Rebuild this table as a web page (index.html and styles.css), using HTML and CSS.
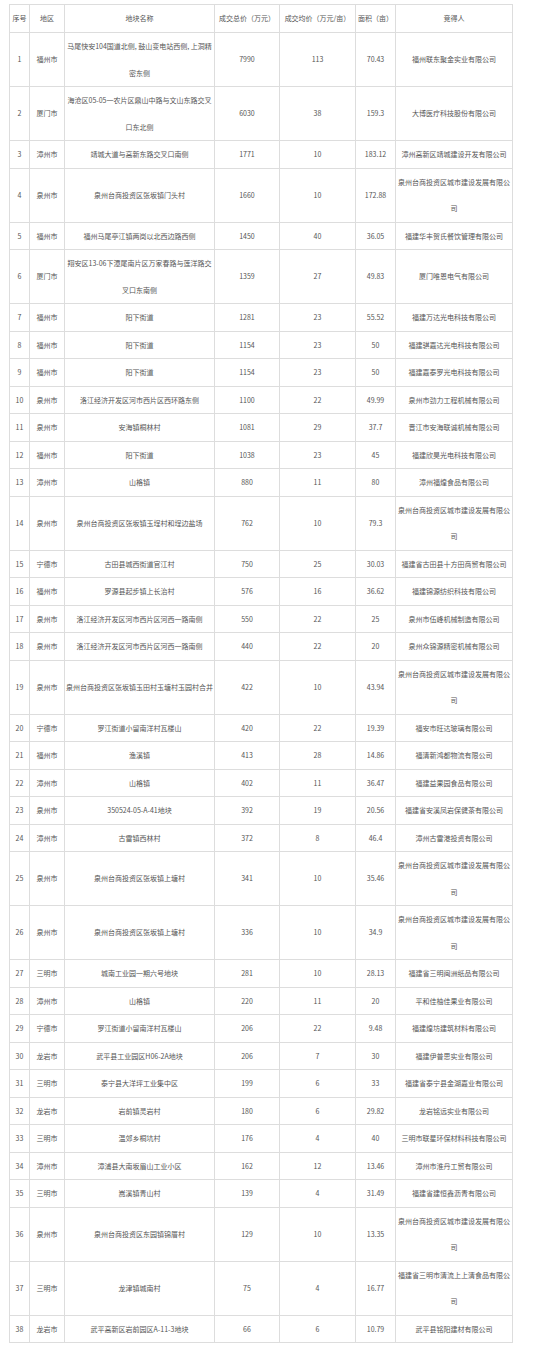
FILE: index.html
```html
<!DOCTYPE html>
<html lang="zh-CN">
<head>
<meta charset="utf-8">
<title>土地成交表</title>
<link rel="stylesheet" href="styles.css">
</head>
<body>
<div class="page">
<table class="land">
<colgroup>
<col class="c-no"><col class="c-area"><col class="c-name"><col class="c-total"><col class="c-avg"><col class="c-size"><col class="c-buyer">
</colgroup>
<thead>
<tr><th>序号</th><th>地区</th><th>地块名称</th><th>成交总价（万元）</th><th>成交均价（万元/亩）</th><th>面积（亩）</th><th>竞得人</th></tr>
</thead>
<tbody>
<tr><td>1</td><td>福州市</td><td>马尾快安104国道北侧, 鼓山变电站西侧, 上洞精密东侧</td><td>7990</td><td>113</td><td>70.43</td><td>福州联东聚金实业有限公司</td></tr>
<tr><td>2</td><td>厦门市</td><td>海沧区05-05一农片区鼎山中路与文山东路交叉口东北侧</td><td>6030</td><td>38</td><td>159.3</td><td>大博医疗科技股份有限公司</td></tr>
<tr><td>3</td><td>漳州市</td><td>靖城大道与高新东路交叉口南侧</td><td>1771</td><td>10</td><td>183.12</td><td>漳州高新区靖城建设开发有限公司</td></tr>
<tr><td>4</td><td>泉州市</td><td>泉州台商投资区张坂镇门头村</td><td>1660</td><td>10</td><td>172.88</td><td>泉州台商投资区城市建设发展有限公司</td></tr>
<tr><td>5</td><td>福州市</td><td>福州马尾亭江镇两岗以北西边路西侧</td><td>1450</td><td>40</td><td>36.05</td><td>福建华丰贺氏餐饮管理有限公司</td></tr>
<tr><td>6</td><td>厦门市</td><td>翔安区13-06下潭尾南片区万家春路与莲洋路交叉口东南侧</td><td>1359</td><td>27</td><td>49.83</td><td>厦门唯恩电气有限公司</td></tr>
<tr><td>7</td><td>福州市</td><td>阳下街道</td><td>1281</td><td>23</td><td>55.52</td><td>福建万达光电科技有限公司</td></tr>
<tr><td>8</td><td>福州市</td><td>阳下街道</td><td>1154</td><td>23</td><td>50</td><td>福建骐嘉达光电科技有限公司</td></tr>
<tr><td>9</td><td>福州市</td><td>阳下街道</td><td>1154</td><td>23</td><td>50</td><td>福建嘉泰罗光电科技有限公司</td></tr>
<tr><td>10</td><td>泉州市</td><td>洛江经济开发区河市西片区西环路东侧</td><td>1100</td><td>22</td><td>49.99</td><td>泉州市劲力工程机械有限公司</td></tr>
<tr><td>11</td><td>泉州市</td><td>安海镇桐林村</td><td>1081</td><td>29</td><td>37.7</td><td>晋江市安海联诚机械有限公司</td></tr>
<tr><td>12</td><td>福州市</td><td>阳下街道</td><td>1038</td><td>23</td><td>45</td><td>福建欣昊光电科技有限公司</td></tr>
<tr><td>13</td><td>漳州市</td><td>山格镇</td><td>880</td><td>11</td><td>80</td><td>漳州福煌食品有限公司</td></tr>
<tr><td>14</td><td>泉州市</td><td>泉州台商投资区张坂镇玉埕村和埕边盐场</td><td>762</td><td>10</td><td>79.3</td><td>泉州台商投资区城市建设发展有限公司</td></tr>
<tr><td>15</td><td>宁德市</td><td>古田县城西街道官江村</td><td>750</td><td>25</td><td>30.03</td><td>福建省古田县十方田商贸有限公司</td></tr>
<tr><td>16</td><td>福州市</td><td>罗源县起步镇上长治村</td><td>576</td><td>16</td><td>36.62</td><td>福建锦源纺织科技有限公司</td></tr>
<tr><td>17</td><td>泉州市</td><td>洛江经济开发区河市西片区河西一路南侧</td><td>550</td><td>22</td><td>25</td><td>泉州市伍峰机械制造有限公司</td></tr>
<tr><td>18</td><td>泉州市</td><td>洛江经济开发区河市西片区河西一路南侧</td><td>440</td><td>22</td><td>20</td><td>泉州众锦源精密机械有限公司</td></tr>
<tr><td>19</td><td>泉州市</td><td>泉州台商投资区张坂镇玉田村玉塘村玉园村合并</td><td>422</td><td>10</td><td>43.94</td><td>泉州台商投资区城市建设发展有限公司</td></tr>
<tr><td>20</td><td>宁德市</td><td>罗江街道小留南洋村瓦楼山</td><td>420</td><td>22</td><td>19.39</td><td>福安市旺达玻璃有限公司</td></tr>
<tr><td>21</td><td>福州市</td><td>渔溪镇</td><td>413</td><td>28</td><td>14.86</td><td>福清新鸿都物流有限公司</td></tr>
<tr><td>22</td><td>漳州市</td><td>山格镇</td><td>402</td><td>11</td><td>36.47</td><td>福建益果园食品有限公司</td></tr>
<tr><td>23</td><td>泉州市</td><td>350524-05-A-41地块</td><td>392</td><td>19</td><td>20.56</td><td>福建省安溪凤岩保健茶有限公司</td></tr>
<tr><td>24</td><td>漳州市</td><td>古雷镇西林村</td><td>372</td><td>8</td><td>46.4</td><td>漳州古雷港投资有限公司</td></tr>
<tr><td>25</td><td>泉州市</td><td>泉州台商投资区张坂镇上塘村</td><td>341</td><td>10</td><td>35.46</td><td>泉州台商投资区城市建设发展有限公司</td></tr>
<tr><td>26</td><td>泉州市</td><td>泉州台商投资区张坂镇上塘村</td><td>336</td><td>10</td><td>34.9</td><td>泉州台商投资区城市建设发展有限公司</td></tr>
<tr><td>27</td><td>三明市</td><td>城南工业园一期六号地块</td><td>281</td><td>10</td><td>28.13</td><td>福建省三明闽洲纸品有限公司</td></tr>
<tr><td>28</td><td>漳州市</td><td>山格镇</td><td>220</td><td>11</td><td>20</td><td>平和佳柚佳果业有限公司</td></tr>
<tr><td>29</td><td>宁德市</td><td>罗江街道小留南洋村瓦楼山</td><td>206</td><td>22</td><td>9.48</td><td>福建煌坊建筑材料有限公司</td></tr>
<tr><td>30</td><td>龙岩市</td><td>武平县工业园区H06-2A地块</td><td>206</td><td>7</td><td>30</td><td>福建伊普思实业有限公司</td></tr>
<tr><td>31</td><td>三明市</td><td>泰宁县大洋坪工业集中区</td><td>199</td><td>6</td><td>33</td><td>福建省泰宁县金湖嘉业有限公司</td></tr>
<tr><td>32</td><td>龙岩市</td><td>岩前镇灵岩村</td><td>180</td><td>6</td><td>29.82</td><td>龙岩铭远实业有限公司</td></tr>
<tr><td>33</td><td>三明市</td><td>温郊乡桐坑村</td><td>176</td><td>4</td><td>40</td><td>三明市联星环保材料科技有限公司</td></tr>
<tr><td>34</td><td>漳州市</td><td>漳浦县大南坂眉山工业小区</td><td>162</td><td>12</td><td>13.46</td><td>漳州市淮丹工贸有限公司</td></tr>
<tr><td>35</td><td>三明市</td><td>嵩溪镇青山村</td><td>139</td><td>4</td><td>31.49</td><td>福建省建恒鑫沥青有限公司</td></tr>
<tr><td>36</td><td>泉州市</td><td>泉州台商投资区东园镇锦厝村</td><td>129</td><td>10</td><td>13.35</td><td>泉州台商投资区城市建设发展有限公司</td></tr>
<tr><td>37</td><td>三明市</td><td>龙津镇城南村</td><td>75</td><td>4</td><td>16.77</td><td>福建省三明市清流上上清食品有限公司</td></tr>
<tr><td>38</td><td>龙岩市</td><td>武平高新区岩前园区A-11-3地块</td><td>66</td><td>6</td><td>10.79</td><td>武平县铭阳建材有限公司</td></tr>
</tbody>
</table>
</div>
</body>
</html>
```
FILE: styles.css
```css
html, body {
  margin: 0;
  padding: 0;
  background: #ffffff;
}

.page {
  padding: 4px 0 0 9px;
}

.land {
  width: 504px;
  table-layout: fixed;
  border-collapse: collapse;
  font-family: "Noto Sans CJK SC", "Noto Sans", sans-serif;
  font-size: 7px;
  color: #555555;
}

.c-no { width: 20px; }
.c-area { width: 35px; }
.c-name { width: 150px; }
.c-total { width: 65px; }
.c-avg { width: 76px; }
.c-size { width: 40px; }
.c-buyer { width: 117px; }

.land th,
.land td {
  border: 1px solid #dddddd;
  padding: 0;
  text-align: center;
  vertical-align: middle;
  font-weight: normal;
  line-height: 26.5px;
  white-space: normal;
}

.land th {
  line-height: 27px;
}
```
